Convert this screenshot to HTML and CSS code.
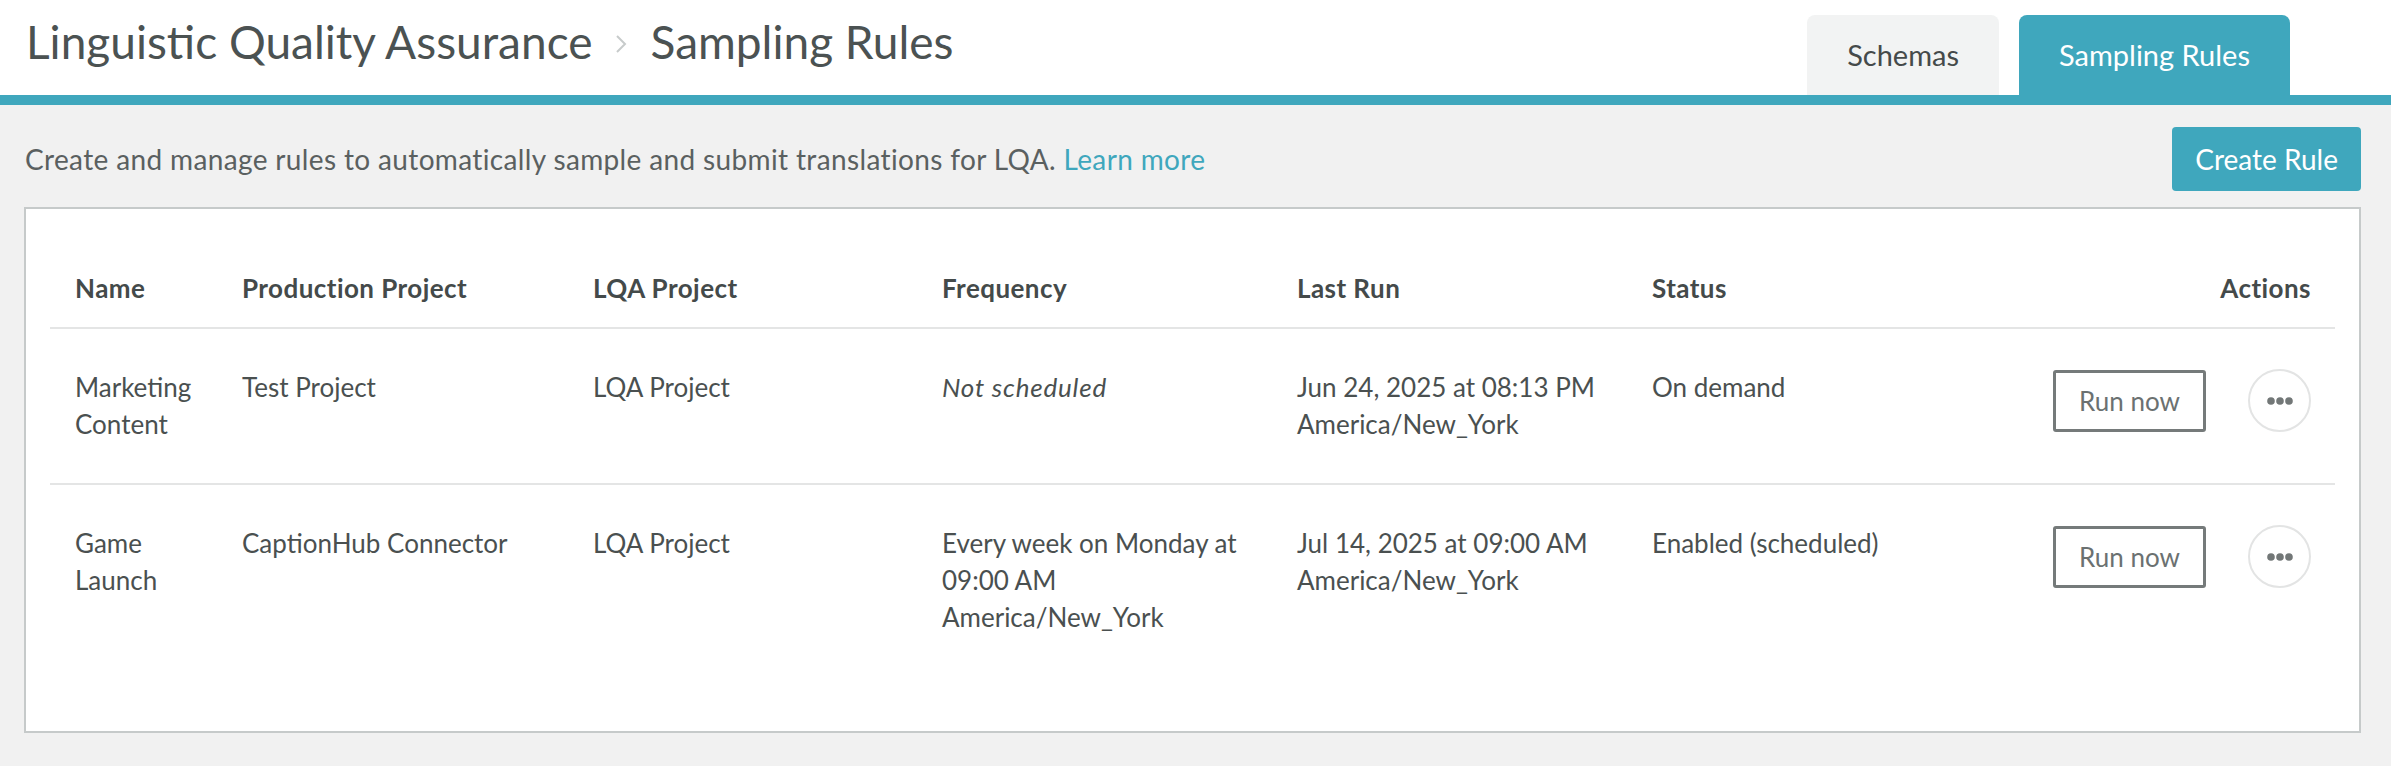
FILE: index.html
```html
<!DOCTYPE html>
<html lang="en">
<head>
<meta charset="utf-8">
<title>Sampling Rules</title>
<link rel="stylesheet" href="styles.css">
</head>
<body>
<header class="topbar">
  <div class="breadcrumb">
    <span class="crumb">Linguistic Quality Assurance</span>
    <svg class="chev" width="12" height="20" viewBox="0 0 12 20"><path d="M2 2 L10 10 L2 18" fill="none" stroke="#c7cbcb" stroke-width="2"/></svg>
    <span class="crumb">Sampling Rules</span>
  </div>
  <nav class="tabs">
    <div class="tab">Schemas</div>
    <div class="tab active">Sampling Rules</div>
  </nav>
</header>
<div class="rule-bar"></div>
<main class="content">
  <div class="intro">
    <p class="desc">Create and manage rules to automatically sample and submit translations for LQA. <a href="#" class="link">Learn more</a></p>
    <button class="btn-primary">Create Rule</button>
  </div>
  <section class="panel">
    <table class="rules">
      <colgroup>
        <col class="c-name"><col class="c-prod"><col class="c-lqa"><col class="c-freq"><col class="c-last"><col class="c-status"><col>
      </colgroup>
      <thead>
        <tr>
          <th>Name</th>
          <th>Production Project</th>
          <th>LQA Project</th>
          <th>Frequency</th>
          <th>Last Run</th>
          <th>Status</th>
          <th class="right">Actions</th>
        </tr>
      </thead>
      <tbody>
        <tr>
          <td>Marketing<br>Content</td>
          <td>Test Project</td>
          <td>LQA Project</td>
          <td><em>Not scheduled</em></td>
          <td>Jun 24, 2025 at 08:13 PM<br>America/New_York</td>
          <td>On demand</td>
          <td class="right">
            <div class="actions">
              <button class="btn-outline">Run now</button>
              <button class="btn-more"><svg width="26" height="8" viewBox="0 0 26 8"><circle cx="4" cy="4" r="3.8" fill="#727777"/><circle cx="13" cy="4" r="3.8" fill="#727777"/><circle cx="22" cy="4" r="3.8" fill="#727777"/></svg></button>
            </div>
          </td>
        </tr>
        <tr>
          <td>Game<br>Launch</td>
          <td>CaptionHub Connector</td>
          <td>LQA Project</td>
          <td>Every week on Monday at<br>09:00 AM<br>America/New_York</td>
          <td>Jul 14, 2025 at 09:00 AM<br>America/New_York</td>
          <td>Enabled (scheduled)</td>
          <td class="right">
            <div class="actions">
              <button class="btn-outline">Run now</button>
              <button class="btn-more"><svg width="26" height="8" viewBox="0 0 26 8"><circle cx="4" cy="4" r="3.8" fill="#727777"/><circle cx="13" cy="4" r="3.8" fill="#727777"/><circle cx="22" cy="4" r="3.8" fill="#727777"/></svg></button>
            </div>
          </td>
        </tr>
      </tbody>
    </table>
  </section>
</main>
</body>
</html>
```
FILE: styles.css
```css
* { box-sizing: border-box; }
html, body { margin: 0; padding: 0; }
body {
  font-family: Lato, "Open Sans", sans-serif;
  background: #f1f1f1;
  color: #4a5050;
  min-height: 766px;
}
.topbar {
  background: #ffffff;
  height: 95px;
  display: flex;
  justify-content: space-between;
  align-items: flex-start;
  padding: 0 101px 0 26px;
}
.breadcrumb {
  display: flex;
  align-items: center;
  margin-top: 19px;
  font-size: 46px;
  line-height: 46px;
  color: #4b5252;
}
.chev { margin: 4px 24px 0 22px; }
.tabs {
  align-self: flex-end;
  display: flex;
  gap: 20px;
}
.tab {
  height: 80px;
  line-height: 80px;
  padding: 0 40px;
  font-size: 29px;
  background: #f2f3f3;
  color: #454a4a;
  border-radius: 8px 8px 0 0;
}
.tab.active {
  background: #3fa7bd;
  color: #ffffff;
}
.rule-bar { height: 10px; background: #3fa7bd; }
.content { padding: 22px 30px 33px 24px; }
.intro {
  display: flex;
  justify-content: space-between;
  align-items: center;
  padding-left: 1px;
}
.desc {
  margin: 0;
  font-size: 28px;
  letter-spacing: 0.36px;
  color: #5a6060;
}
.link { color: #3fa7bd; text-decoration: none; }
.btn-primary {
  height: 64px;
  padding: 0 23px;
  border: 0;
  border-radius: 4px;
  background: #3fa7bd;
  color: #ffffff;
  font-family: inherit;
  font-size: 28px;
}
.panel {
  margin-top: 16px;
  background: #ffffff;
  border: 2px solid #c6caca;
  padding: 0 24px 55px 24px;
}
.rules {
  width: 100%;
  border-collapse: collapse;
  table-layout: fixed;
  font-size: 26px;
  line-height: 37px;
}
.c-name { width: 167px; }
.c-prod { width: 351px; }
.c-lqa { width: 349px; }
.c-freq { width: 355px; }
.c-last { width: 355px; }
.c-status { width: 355px; }
.rules th {
  text-align: left;
  font-weight: 700;
  letter-spacing: 0.45px;
  color: #444a4a;
  padding: 61px 25px 20px 25px;
  border-bottom: 2px solid #e4e5e5;
}
.rules td {
  vertical-align: top;
  padding: 40px 25px;
  color: #4a5050;
}
.rules tbody tr:first-child td { border-bottom: 2px solid #e4e5e5; }
.rules th.right, .rules td.right { text-align: right; padding-right: 24px; }
.rules em { font-style: italic; letter-spacing: 0.8px; }
.actions {
  display: flex;
  justify-content: flex-end;
  align-items: center;
  gap: 42px;
}
.btn-outline {
  width: 153px;
  height: 62px;
  border: 3px solid #757a7a;
  border-radius: 3px;
  background: #ffffff;
  color: #6b7171;
  font-family: inherit;
  font-size: 26px;
  padding: 0;
}
.btn-more {
  width: 63px;
  height: 63px;
  border-radius: 50%;
  border: 2px solid #e3e4e4;
  background: #ffffff;
  display: flex;
  align-items: center;
  justify-content: center;
  padding: 0;
}
```
